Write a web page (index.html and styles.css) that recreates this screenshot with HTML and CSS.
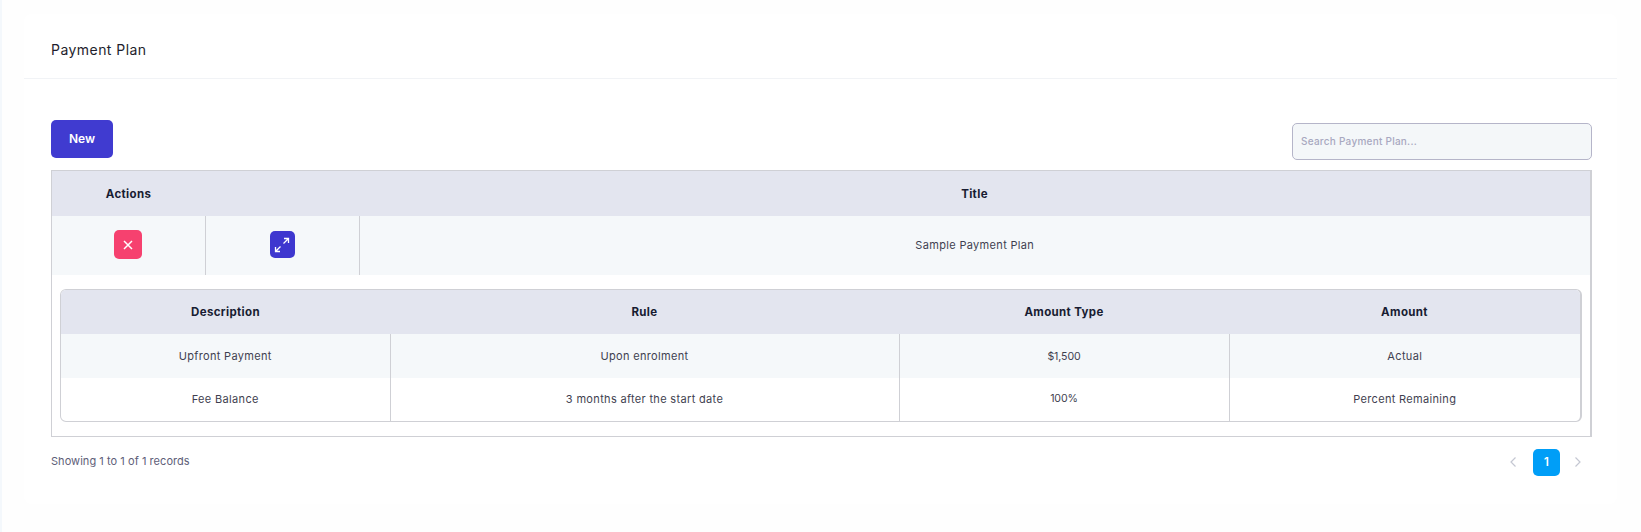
FILE: index.html
```html
<!DOCTYPE html>
<html lang="en">
<head>
<meta charset="utf-8">
<title>Payment Plan</title>
<link rel="stylesheet" href="styles.css">
</head>
<body>
<main class="card">
  <header class="card-head"><h1>Payment Plan</h1></header>
  <section class="card-body">
    <div class="toolbar">
      <button class="btn-new" type="button">New</button>
      <input class="search" type="text" placeholder="Search Payment Plan...">
    </div>
    <div class="table-wrap">
      <table class="outer">
        <colgroup><col class="c-act"><col class="c-act2"><col></colgroup>
        <thead><tr><th>Actions</th><th></th><th>Title</th></tr></thead>
        <tbody>
          <tr class="main-row">
            <td><button class="icon-btn del" type="button" aria-label="Delete">
              <svg viewBox="0 0 12 12" width="12" height="12"><path d="M2 2l8 8M10 2l-8 8" stroke="#fff" stroke-width="1.5" fill="none"/></svg></button></td>
            <td><button class="icon-btn expand" type="button" aria-label="Expand">
              <svg viewBox="0 0 18 18" width="18" height="18"><path d="M10.5 7.5L15.5 2.5M11 2.5h4.5V7M7.5 10.5L2.5 15.5M2.5 11v4.5H7" stroke="#fff" stroke-width="1.3" fill="none"/></svg></button></td>
            <td class="row-title">Sample Payment Plan</td>
          </tr>
          <tr class="detail-row">
            <td colspan="3">
              <div class="inner-wrap">
                <table class="inner">
                  <colgroup><col class="i1"><col class="i2"><col class="i3"><col></colgroup>
                  <thead><tr><th>Description</th><th>Rule</th><th>Amount Type</th><th>Amount</th></tr></thead>
                  <tbody>
                    <tr class="shade"><td>Upfront Payment</td><td>Upon enrolment</td><td class="num">$1,500</td><td>Actual</td></tr>
                    <tr class="plain"><td>Fee Balance</td><td>3 months after the start date</td><td class="num">100%</td><td>Percent Remaining</td></tr>
                  </tbody>
                </table>
              </div>
            </td>
          </tr>
        </tbody>
      </table>
    </div>
    <footer class="foot">
      <span class="info">Showing 1 to 1 of 1 records</span>
      <nav class="pager">
        <svg viewBox="0 0 8 12" width="8" height="12"><path d="M6.5 1.5L2 6l4.5 4.5" stroke="#c4c7d2" stroke-width="1.2" fill="none"/></svg>
        <span class="page">1</span>
        <svg class="next" viewBox="0 0 8 12" width="8" height="12"><path d="M1.5 1.5L6 6l-4.5 4.5" stroke="#c4c7d2" stroke-width="1.2" fill="none"/></svg>
      </nav>
    </footer>
  </section>
</main>
</body>
</html>
```
FILE: styles.css
```css
* { box-sizing: border-box; }
body {
  margin: 0;
  padding: 14px 24px 0 22px;
  height: 532px;
  background: #fefefe;
  border-left: 2px solid #f4f8fc;
  font-family: "Inter", "Liberation Sans", sans-serif;
  font-size: 11px;
  letter-spacing: .33px;
  color: #3f3f50;
  overflow: hidden;
}
.card { background: #fff; border-radius: 8px; height: 490px; }
.card-head {
  height: 65px;
  border-bottom: 1px solid #f1f3f6;
  padding: 6px 27px 0;
  display: flex;
  align-items: center;
}
.card-head h1 { margin: 0; font-size: 14px; font-weight: 400; color: #1e1e2d; letter-spacing: .45px; }
.card-body { padding: 41px 25px 0 27px; }
.toolbar { display: flex; justify-content: space-between; align-items: flex-end; height: 38px; }
.btn-new {
  width: 62px; height: 38px;
  border: 0; border-radius: 5px;
  background: #403bd0; color: #fff;
  padding: 0 0 2px;
  font: 600 12px "Inter", sans-serif;
}
.search {
  width: 300px; height: 37px; margin-bottom: -2px;
  border: 1px solid #b5b5c9; border-radius: 5px;
  background: #f4f7f9;
  padding: 0 8px 2px;
  font: 500 10px "Inter", sans-serif;
  letter-spacing: .25px;
}
.search::placeholder { color: #a8a8c0; opacity: 1; }
.table-wrap { margin-top: 12px; border: 1px solid #cfd0d5; border-right-width: 2px; }
table { border-collapse: collapse; width: 100%; table-layout: fixed; }
th { font-weight: 700; font-size: 11.5px; letter-spacing: .35px; color: #181c32; background: #e3e5ef; text-align: center; padding: 0; }
td { text-align: center; padding: 0; }
.c-act { width: 153px; }
.c-act2 { width: 154px; }
.outer > thead th { height: 45px; }
.main-row td { height: 59px; background: #f5f8fa; border-right: 1px solid #cfd0d5; }
.main-row td:last-child { border-right: 0; }
.main-row .row-title { padding-bottom: 2px; }
.icon-btn { display: inline-flex; align-items: center; justify-content: center; border: 0; padding: 0; vertical-align: middle; margin-bottom: 2px; }
.del { width: 28px; height: 29px; border-radius: 5px; background: #f6416f; }
.expand { width: 25px; height: 27px; border-radius: 5px; background: #3e37cf; }
.detail-row > td { padding: 14px 8px; }
.inner-wrap { border: 1px solid #cfd0d5; border-right-width: 2px; border-radius: 6px; overflow: hidden; }
.i1 { width: 329px; }
.i2 { width: 509px; }
.i3 { width: 330px; }
.inner th { height: 44px; }
.inner td { height: 43px; border-right: 1px solid #cfd0d5; }
.inner td:last-child { border-right: 0; }
.inner .plain td { padding-bottom: 2px; }
.shade td { background: #f5f8fa; height: 44px; }
.inner .num { font-size: 10.6px; letter-spacing: -.1px; }
.foot { display: flex; justify-content: space-between; align-items: center; margin-top: 11px; height: 28px; }
.info { color: #5e5e78; letter-spacing: .05px; padding-bottom: 2px; }
.pager { display: flex; align-items: center; gap: 16px; padding-right: 10px; }
.next { margin-left: -2px; }
.page {
  width: 27px; height: 27px; border-radius: 5px;
  background: #009ef7; color: #fff;
  display: flex; align-items: center; justify-content: center;
  font-weight: 600; font-size: 11.5px;
}
```
